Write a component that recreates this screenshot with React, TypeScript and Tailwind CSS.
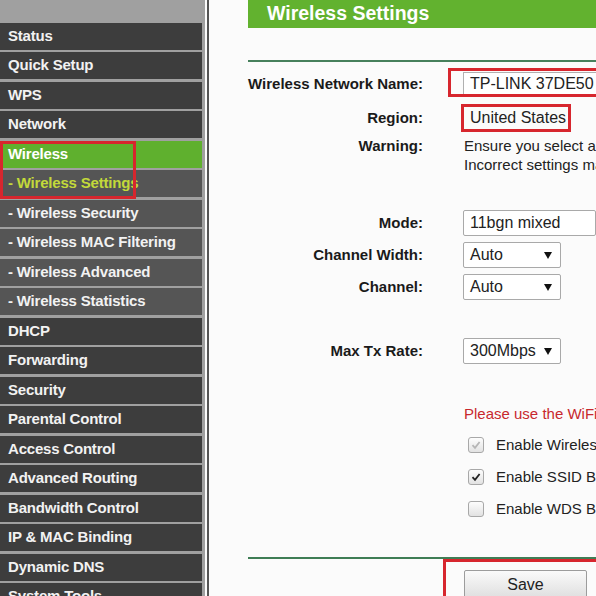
import React from "react";

type Item = { t: string; k: "m" | "s" | "a" | "as" };

const items: Item[] = [
  { t: "Status", k: "m" },
  { t: "Quick Setup", k: "m" },
  { t: "WPS", k: "m" },
  { t: "Network", k: "m" },
  { t: "Wireless", k: "a" },
  { t: "- Wireless Settings", k: "as" },
  { t: "- Wireless Security", k: "s" },
  { t: "- Wireless MAC Filtering", k: "s" },
  { t: "- Wireless Advanced", k: "s" },
  { t: "- Wireless Statistics", k: "s" },
  { t: "DHCP", k: "m" },
  { t: "Forwarding", k: "m" },
  { t: "Security", k: "m" },
  { t: "Parental Control", k: "m" },
  { t: "Access Control", k: "m" },
  { t: "Advanced Routing", k: "m" },
  { t: "Bandwidth Control", k: "m" },
  { t: "IP & MAC Binding", k: "m" },
  { t: "Dynamic DNS", k: "m" },
  { t: "System Tools", k: "m" },
  { t: "Logout", k: "m" },
];

function itemClass(k: Item["k"]) {
  if (k === "a") return "bg-[#5fb02e] text-white";
  if (k === "as") return "bg-[#555555] text-[#c3d93a]";
  if (k === "s") return "bg-[#555555] text-[#f2f2f2]";
  return "bg-[#3d3d3d] text-[#f2f2f2]";
}

function Arrow() {
  return (
    <svg width="8" height="7" viewBox="0 0 8 7" className="shrink-0">
      <path d="M0 0 H8 L4 7 Z" fill="#111" />
    </svg>
  );
}

function Select({ value, w }: { value: string; w: string }) {
  return (
    <div
      className={`${w} h-[26px] border border-[#a9a9a9] rounded-[2px] bg-white flex items-center justify-between pl-[6px] pr-[8px] text-[16px] text-[#222]`}
    >
      <span>{value}</span>
      <Arrow />
    </div>
  );
}

function Label({ children }: { children: React.ReactNode }) {
  return (
    <div className="w-[175px] shrink-0 text-right font-bold text-[15px] text-[#1a1a1a] whitespace-nowrap">
      {children}
    </div>
  );
}

function Check({ state }: { state: "disabled" | "on" | "off" }) {
  return (
    <div className="ml-[5px] w-[16px] h-[16px] rounded-[3px] border border-[#a8a8a8] bg-gradient-to-b from-[#fdfdfd] to-[#e2e2e2] flex items-center justify-center shrink-0">
      {state !== "off" && (
        <svg width="10" height="10" viewBox="0 0 10 10">
          <path
            d="M1.5 5.2 L4 7.8 L8.6 2"
            fill="none"
            stroke={state === "on" ? "#222" : "#b5b5b5"}
            strokeWidth="1.8"
          />
        </svg>
      )}
    </div>
  );
}

export default function App() {
  return (
    <div className="w-[596px] h-[596px] overflow-hidden flex bg-[#fbfbfb] font-['Liberation_Sans',Arial,sans-serif]">
      {/* Sidebar */}
      <div className="relative w-[205px] shrink-0 bg-[#a0a0a0] flex flex-col gap-[2.5px] pt-[22.5px]">
        {items.map((it) => (
          <div
            key={it.t}
            className={`w-[202px] h-[27px] shrink-0 flex items-center pl-[8px] font-bold text-[15px] tracking-[-0.2px] whitespace-nowrap ${itemClass(
              it.k
            )}`}
          >
            {it.t}
          </div>
        ))}
        <div className="absolute left-0 top-[141px] w-[136px] h-[58px] border-[3px] border-[#d7262e]" />
      </div>

      {/* Main */}
      <div className="ml-[2px] border-l-[2px] border-[#555] flex-1 min-w-0 pl-[39px] flex flex-col">
        <div className="h-[28px] bg-[#62b22f] flex items-center pl-[19px] text-white font-bold text-[19.5px] w-[400px] shrink-0">
          Wireless Settings
        </div>
        <div className="mt-[32px] h-[2px] bg-[#47805c] w-[400px] shrink-0" />

        {/* Name */}
        <div className="mt-[7px] h-[30px] flex items-center shrink-0">
          <Label>Wireless Network Name:</Label>
          <div className="relative ml-[40px]">
            <div className="w-[200px] h-[25px] border border-[#b0b0b0] bg-white flex items-center pl-[6px] text-[16px] text-[#222] whitespace-nowrap">
              TP-LINK 37DE50
            </div>
            <div className="absolute left-[-15px] top-[-4px] w-[200px] h-[29px] border-[3px] border-[#d7262e]" />
          </div>
        </div>

        {/* Region */}
        <div className="mt-[5px] h-[28px] flex items-center shrink-0">
          <Label>Region:</Label>
          <div className="ml-[38px] w-[110px] h-[28px] border-[3px] border-[#d7262e] flex items-center pl-[6px] text-[16px] text-[#222] whitespace-nowrap">
            United States
          </div>
        </div>

        {/* Warning */}
        <div className="mt-[4px] flex shrink-0 leading-[19px]">
          <Label>Warning:</Label>
          <div className="ml-[41px] text-[15px] text-[#222] whitespace-nowrap">
            <div>Ensure you select a correct country to conform local law.</div>
            <div>Incorrect settings may cause interference.</div>
          </div>
        </div>

        {/* Mode */}
        <div className="mt-[36px] h-[26px] flex items-center shrink-0">
          <Label>Mode:</Label>
          <div className="ml-[40px] w-[200px] h-[26px] border border-[#a9a9a9] rounded-[2px] bg-white flex items-center pl-[6px] text-[16px] text-[#222] whitespace-nowrap">
            11bgn mixed
          </div>
        </div>

        <div className="mt-[6px] h-[26px] flex items-center shrink-0">
          <Label>Channel Width:</Label>
          <div className="ml-[40px]">
            <Select value="Auto" w="w-[98px]" />
          </div>
        </div>

        <div className="mt-[6px] h-[26px] flex items-center shrink-0">
          <Label>Channel:</Label>
          <div className="ml-[40px]">
            <Select value="Auto" w="w-[98px]" />
          </div>
        </div>

        <div className="mt-[38px] h-[26px] flex items-center shrink-0">
          <Label>Max Tx Rate:</Label>
          <div className="ml-[40px]">
            <Select value="300Mbps" w="w-[98px]" />
          </div>
        </div>

        {/* Red note */}
        <div className="mt-[40px] h-[20px] flex items-center shrink-0">
          <div className="w-[175px] shrink-0" />
          <div className="ml-[41px] text-[15px] text-[#c8282e] whitespace-nowrap">
            Please use the WiFi Protected Setup function.
          </div>
        </div>

        {[
          { s: "disabled" as const, t: "Enable Wireless Router Radio", mt: "mt-[11px]" },
          { s: "on" as const, t: "Enable SSID Broadcast", mt: "mt-[12px]" },
          { s: "off" as const, t: "Enable WDS Bridging", mt: "mt-[12px]" },
        ].map((c) => (
          <div key={c.t} className={`${c.mt} h-[20px] flex items-center shrink-0`}>
            <div className="w-[175px] shrink-0" />
            <div className="ml-[40px] flex items-center">
              <Check state={c.s} />
              <span className="ml-[12px] text-[15px] text-[#222] whitespace-nowrap">{c.t}</span>
            </div>
          </div>
        ))}

        <div className="mt-[38px] h-[2px] bg-[#3f7d55] w-[400px] shrink-0" />

        <div className="mt-[11px] h-[30px] flex items-start shrink-0">
          <div className="w-[175px] shrink-0" />
          <div className="relative ml-[41px]">
            <div className="w-[123px] h-[30px] border border-[#9c9c9c] rounded-[2px] bg-gradient-to-b from-[#fafafa] to-[#dedede] flex items-center justify-center text-[16px] text-[#222]">
              Save
            </div>
            <div className="absolute left-[-21px] top-[-11px] w-[160px] h-[50px] border-[3px] border-[#d7262e]" />
          </div>
        </div>
      </div>
    </div>
  );
}
